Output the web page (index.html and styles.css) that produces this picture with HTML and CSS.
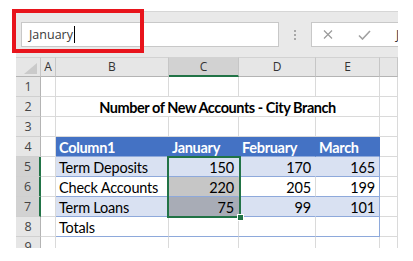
FILE: index.html
```html
<!DOCTYPE html>
<html>
<head>
<meta charset="utf-8">
<link rel="stylesheet" href="styles.css">
</head>
<body>
<div class="sheet">
  <div class="fbar">
    <div class="namebox"><span class="nb-text">January</span><span class="caret"></span></div>
    <div class="dots"><i></i><i></i><i></i></div>
    <div class="fbox">
      <svg class="ic-x" width="10" height="9" viewBox="0 0 10 9"><path d="M1 0.5 L9 8.5 M9 0.5 L1 8.5" stroke="#9a9a9a" stroke-width="1.2" fill="none"/></svg>
      <svg class="ic-ok" width="13" height="10" viewBox="0 0 13 10"><path d="M1 5.5 L4.5 9 L12 1" stroke="#a0a0a0" stroke-width="1.6" fill="none"/></svg>
      <span class="ftext">J</span>
    </div>
  </div>
  <div class="grid">
    <div class="ch corner"><svg width="13" height="11" viewBox="0 0 13 11" class="tri"><polygon points="13,0 13,11 0,11" fill="#cacaca"/></svg></div>
    <div class="ch">A</div><div class="ch">B</div><div class="ch hl">C</div><div class="ch">D</div><div class="ch">E</div><div class="ch"></div>

    <div class="rh">1</div><div class="c"></div><div class="c"></div><div class="c"></div><div class="c"></div><div class="c"></div><div class="c"></div>

    <div class="rh">2</div><div class="c"></div><div class="c title">Number of New Accounts - City Branch</div><div class="c"></div>

    <div class="rh">3</div><div class="c"></div><div class="c"></div><div class="c"></div><div class="c"></div><div class="c"></div><div class="c"></div>

    <div class="rh">4</div><div class="c"></div><div class="c th">Column1</div><div class="c th">January</div><div class="c th">February</div><div class="c th">March</div><div class="c"></div>

    <div class="rh hl">5</div><div class="c"></div><div class="c tb">Term Deposits</div><div class="c tb num">150</div><div class="c tb num">170</div><div class="c tb num last">165</div><div class="c"></div>

    <div class="rh hl">6</div><div class="c"></div><div class="c tw">Check Accounts</div><div class="c tw num shade-w">220</div><div class="c tw num">205</div><div class="c tw num last">199</div><div class="c"></div>

    <div class="rh hl">7</div><div class="c"></div><div class="c tb">Term Loans</div><div class="c tb num shade-b">75</div><div class="c tb num">99</div><div class="c tb num last">101</div><div class="c"></div>

    <div class="rh">8</div><div class="c"></div><div class="c tw">Totals</div><div class="c tw"></div><div class="c tw"></div><div class="c tw last"></div><div class="c"></div>

    <div class="rh">9</div><div class="c"></div><div class="c"></div><div class="c"></div><div class="c"></div><div class="c"></div><div class="c"></div>

    <div class="sel"><span class="handle"></span></div>
  </div>
</div>
<div class="callout"></div>
</body>
</html>
```

FILE: styles.css
```css
html, body {
  margin: 0;
  background: #ffffff;
}
body {
  font-family: "Lato", "Liberation Sans", sans-serif;
  position: relative;
}
.sheet {
  margin: 11px 0 0 16px;
  width: 382px;
  height: 237px;
  overflow: hidden;
  background: #e6e6e6;
}
.fbar {
  height: 46px;
  box-sizing: border-box;
  border-top: 1px solid #d6d6d6;
  background: #e9e9e9;
  display: flex;
  align-items: flex-start;
  padding: 10px 0 0 5px;
}
.namebox {
  flex: none;
  width: 258px;
  height: 25px;
  box-sizing: border-box;
  background: #ffffff;
  border: 1px solid #c8c8c8;
  display: flex;
  align-items: center;
  padding-left: 7px;
  font-family: "Open Sans", sans-serif;
  font-size: 12.5px;
  color: #3a3a3a;
}
.caret {
  width: 1px;
  height: 17px;
  background: #000;
  margin-left: 1px;
}
.dots {
  flex: none;
  width: 32px;
  height: 25px;
  display: flex;
  flex-direction: column;
  align-items: center;
  justify-content: center;
  gap: 2px;
}
.dots i {
  display: block;
  width: 2px;
  height: 2px;
  background: #a8a8a8;
}
.fbox {
  flex: none;
  width: 120px;
  height: 25px;
  box-sizing: border-box;
  background: #ffffff;
  border: 1px solid #c8c8c8;
  display: flex;
  align-items: center;
  padding-left: 11px;
}
.ic-ok {
  margin-left: 25px;
}
.ftext {
  margin-left: 25px;
  font-family: "Open Sans", sans-serif;
  font-size: 12px;
  color: #333;
}
.grid {
  position: relative;
  display: grid;
  grid-template-columns: 25px 15px 113px 70px 77px 64px 18px;
  grid-auto-rows: 20px;
  background: #ffffff;
}
.grid > div {
  box-sizing: border-box;
}
.ch {
  background: #e6e6e6;
  border-top: 1px solid #d2d2d2;
  border-right: 1px solid #c6c6c6;
  border-bottom: 1px solid #b4b4b4;
  font-family: "Open Sans", sans-serif;
  font-size: 12px;
  color: #333;
  text-align: center;
  line-height: 18px;
}
.ch.hl {
  background: #d2d2d2;
  border-bottom: 2px solid #217346;
}
.corner {
  position: relative;
}
.tri {
  position: absolute;
  right: 3px;
  bottom: 2px;
}
.rh {
  background: #e6e6e6;
  border-right: 1px solid #b4b4b4;
  border-bottom: 1px solid #d0d0d0;
  font-family: "Open Sans", sans-serif;
  font-size: 12.5px;
  color: #444;
  text-align: center;
  line-height: 20px;
}
.rh.hl {
  background: #d2d2d2;
  border-right: 2px solid #217346;
}
.c {
  border-right: 1px solid #dadada;
  border-bottom: 1px solid #dadada;
  font-size: 14.5px;
  letter-spacing: -0.2px;
  line-height: 21px;
  color: #000;
  padding: 0 3px;
  white-space: nowrap;
  overflow: hidden;
}
.title {
  grid-column: 3 / 7;
  font-weight: bold;
  text-align: center;
  letter-spacing: -0.45px;
}
.th {
  background: #4472c4;
  color: #ffffff;
  font-weight: bold;
  letter-spacing: -0.3px;
  border-right-color: #4472c4;
  border-bottom-color: #8ea9db;
}
.tb {
  background: #d9e1f2;
  border-right-color: #d9e1f2;
  border-bottom-color: #8ea9db;
}
.tw {
  border-bottom-color: #8ea9db;
}
.last {
  border-right-color: #8ea9db;
}
.num {
  text-align: right;
  padding-right: 4px;
}
.shade-w {
  background: #c6c6c6;
  border-right-color: #c6c6c6;
}
.shade-b {
  background: #a8acb6;
  border-right-color: #a8acb6;
}
.sel {
  position: absolute;
  left: 151px;
  top: 99px;
  width: 74px;
  height: 62px;
  box-sizing: border-box;
  border: 2px solid #217346;
}
.handle {
  position: absolute;
  right: -5px;
  bottom: -5px;
  width: 5px;
  height: 5px;
  background: #217346;
  border: 1px solid #ffffff;
}
.callout {
  position: absolute;
  left: 12px;
  top: 9px;
  width: 132px;
  height: 44px;
  box-sizing: border-box;
  border: 4px solid #e8141c;
}
```
